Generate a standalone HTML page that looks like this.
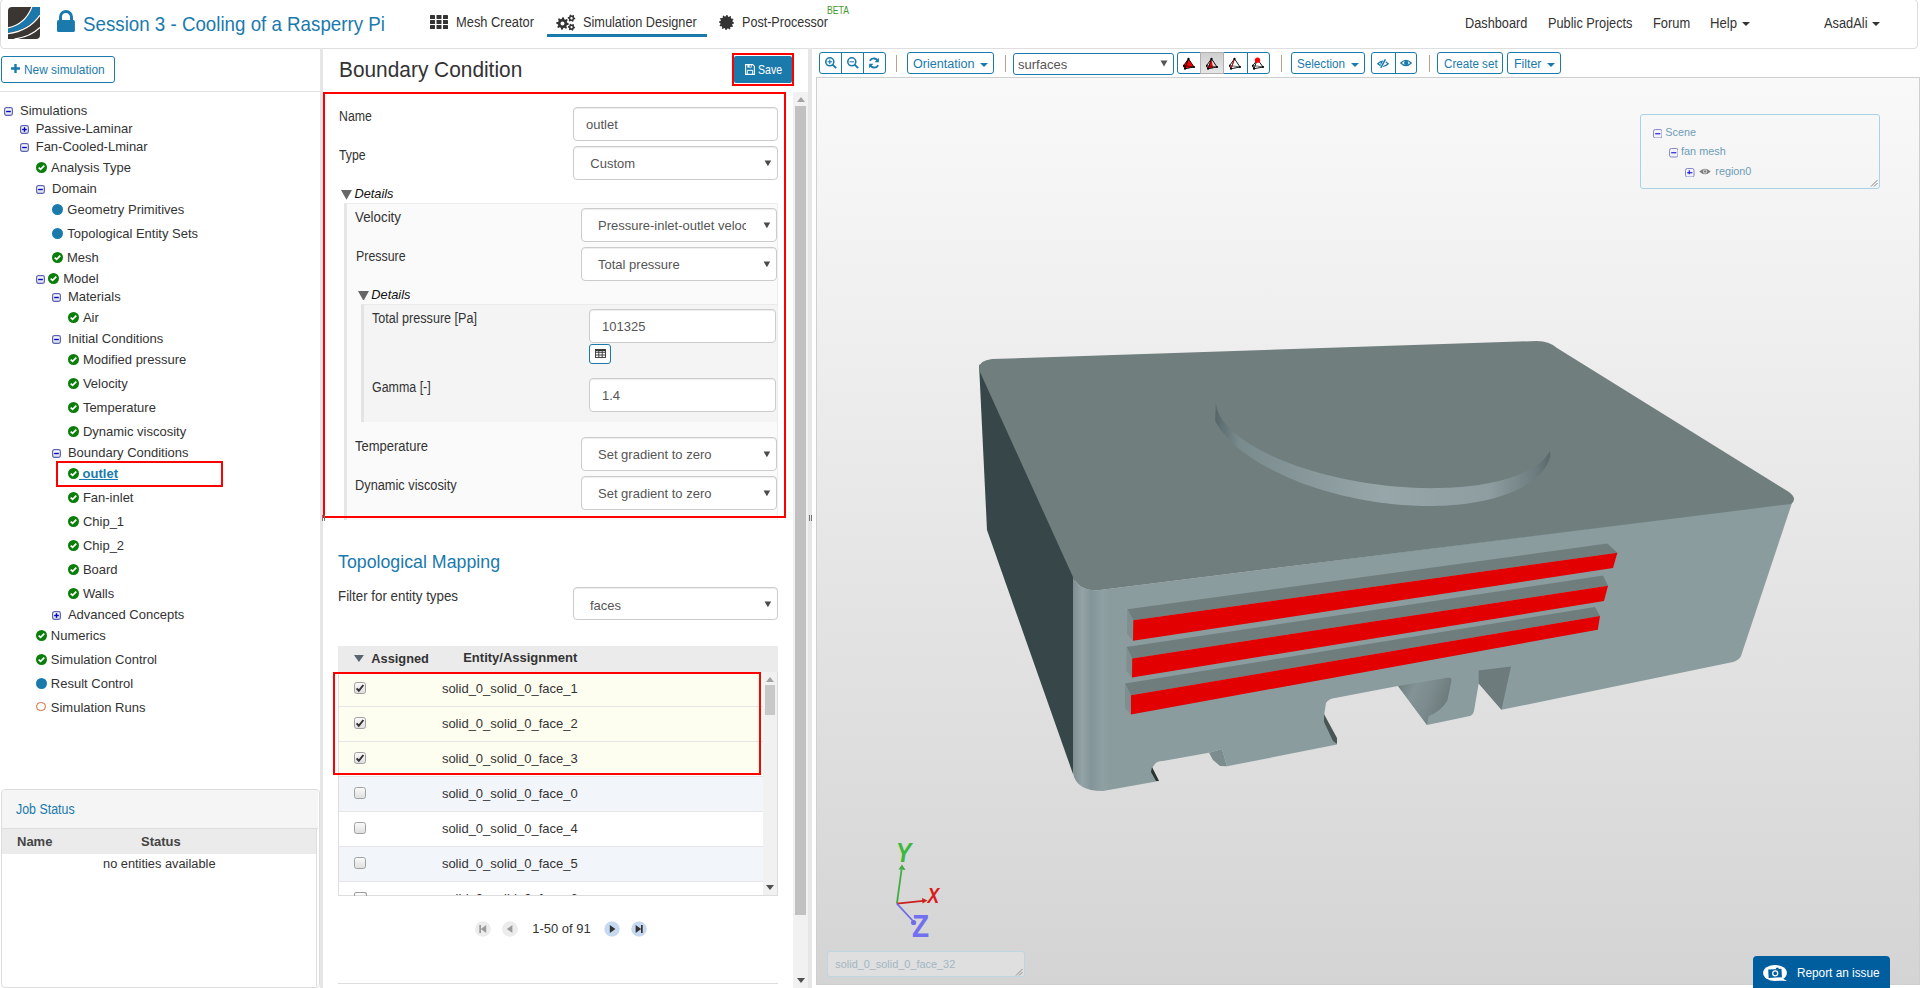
<!DOCTYPE html>
<html><head><meta charset="utf-8"><title>Simulation Designer</title>
<style>
html,body{margin:0;padding:0;width:1920px;height:988px;overflow:hidden;background:#fff;}
body{position:relative;font-family:"Liberation Sans", sans-serif;}
.a{position:absolute;}
.t{position:absolute;white-space:nowrap;font-family:"Liberation Sans", sans-serif;}
svg{display:block;}
</style></head><body>
<div class="a" style="left:0px;top:-1px;width:1916px;height:48px;border:1px solid #dedede;border-radius:4px;background:#fff;"></div>
<svg class="a" style="left:8px;top:7px" width="32" height="32" viewBox="0 0 32 32">
<path d="M4,0 H32 V28 Q32,32 28,32 H0 V4 Q0,0 4,0 Z" fill="#3b3632"/>
<path d="M24.6,0 H32 V7.3 C24,18.5 12.5,24.2 0,25.8 V21.4 C11.5,19.2 20,12 24.6,0 Z" fill="#1a78ad"/>
<path d="M23.9,0 C19.4,11.4 11.2,18.6 0,20.8" stroke="#fff" stroke-width="1.2" fill="none"/>
<path d="M32,8.2 C24.3,19.3 12.8,25 0,26.7" stroke="#fff" stroke-width="1.2" fill="none"/>
<path d="M32,20.4 C26,26.3 17,30.6 6.2,32" stroke="#fff" stroke-width="1.2" fill="none"/>
</svg>
<svg class="a" style="left:57px;top:9.9px" width="18" height="22.1" viewBox="0 0 18 22.1">
<path d="M3.5,11 V7 A5.5,5.5 0 0 1 14.5,7 V11" stroke="#1a7aac" stroke-width="3" fill="none"/>
<rect x="0" y="9.9" width="17.9" height="12.1" rx="1.6" fill="#1a7aac"/></svg>
<div class="t" style="left:83.00px;top:11.70px;font-size:19.62px;line-height:24px;color:#1a7aac;transform:scaleX(0.9552);transform-origin:0 0;">Session 3 - Cooling of a Rasperry Pi</div>
<svg class="a" style="left:430px;top:15px" width="18" height="14" viewBox="0 0 18 14">
<g fill="#333">
<rect x="0" y="0" width="5" height="4" rx="0.6"/><rect x="6.5" y="0" width="5" height="4" rx="0.6"/><rect x="13" y="0" width="5" height="4" rx="0.6"/>
<rect x="0" y="5" width="5" height="4" rx="0.6"/><rect x="6.5" y="5" width="5" height="4" rx="0.6"/><rect x="13" y="5" width="5" height="4" rx="0.6"/>
<rect x="0" y="10" width="5" height="4" rx="0.6"/><rect x="6.5" y="10" width="5" height="4" rx="0.6"/><rect x="13" y="10" width="5" height="4" rx="0.6"/>
</g></svg>
<div class="t" style="left:456.25px;top:13.96px;font-size:14.53px;line-height:17px;color:#333;transform:scaleX(0.8868);transform-origin:0 0;">Mesh Creator</div>
<svg class="a" style="left:556px;top:14px" width="20" height="17" viewBox="0 0 20 17"><path d="M12.80,9.50 L12.68,10.73 L10.75,11.26 L10.32,12.06 L10.95,13.95 L10.00,14.74 L8.26,13.75 L7.40,14.01 L6.50,15.80 L5.27,15.68 L4.74,13.75 L3.94,13.32 L2.05,13.95 L1.26,13.00 L2.25,11.26 L1.99,10.40 L0.20,9.50 L0.32,8.27 L2.25,7.74 L2.68,6.94 L2.05,5.05 L3.00,4.26 L4.74,5.25 L5.60,4.99 L6.50,3.20 L7.73,3.32 L8.26,5.25 L9.06,5.68 L10.95,5.05 L11.74,6.00 L10.75,7.74 L11.01,8.60 Z M8.5,9.5 A2.0,2.0 0 1 0 4.5,9.5 A2.0,2.0 0 1 0 8.5,9.5 Z" fill="#333" fill-rule="evenodd"/><path d="M19.30,4.20 L19.17,5.18 L17.92,5.60 L17.48,6.18 L17.40,7.49 L16.48,7.87 L15.50,7.00 L14.78,6.90 L13.60,7.49 L12.81,6.89 L13.08,5.60 L12.80,4.92 L11.70,4.20 L11.83,3.22 L13.08,2.80 L13.52,2.22 L13.60,0.91 L14.52,0.53 L15.50,1.40 L16.22,1.50 L17.40,0.91 L18.19,1.51 L17.92,2.80 L18.20,3.48 Z M16.7,4.2 A1.2,1.2 0 1 0 14.3,4.2 A1.2,1.2 0 1 0 16.7,4.2 Z" fill="#333" fill-rule="evenodd"/><path d="M19.10,13.20 L18.98,14.13 L17.84,14.55 L17.41,15.11 L17.30,16.32 L16.43,16.68 L15.50,15.90 L14.80,15.81 L13.70,16.32 L12.95,15.75 L13.16,14.55 L12.89,13.90 L11.90,13.20 L12.02,12.27 L13.16,11.85 L13.59,11.29 L13.70,10.08 L14.57,9.72 L15.50,10.50 L16.20,10.59 L17.30,10.08 L18.05,10.65 L17.84,11.85 L18.11,12.50 Z M16.6,13.2 A1.1,1.1 0 1 0 14.4,13.2 A1.1,1.1 0 1 0 16.6,13.2 Z" fill="#333" fill-rule="evenodd"/></svg>
<div class="t" style="left:583.00px;top:13.96px;font-size:14.53px;line-height:17px;color:#333;transform:scaleX(0.8755);transform-origin:0 0;">Simulation Designer</div>
<div class="a" style="left:547px;top:34px;width:160px;height:3px;background:#1a7aac;"></div>
<svg class="a" style="left:719px;top:15px" width="15" height="15" viewBox="0 0 15 15"><path d="M15.00,7.50 L14.94,8.48 L13.30,9.05 L13.04,9.80 L14.00,11.25 L13.45,12.07 L11.74,11.74 L11.15,12.26 L11.25,14.00 L10.37,14.43 L9.05,13.30 L8.28,13.45 L7.50,15.00 L6.52,14.94 L5.95,13.30 L5.20,13.04 L3.75,14.00 L2.93,13.45 L3.26,11.74 L2.74,11.15 L1.00,11.25 L0.57,10.37 L1.70,9.05 L1.55,8.28 L0.00,7.50 L0.06,6.52 L1.70,5.95 L1.96,5.20 L1.00,3.75 L1.55,2.93 L3.26,3.26 L3.85,2.74 L3.75,1.00 L4.63,0.57 L5.95,1.70 L6.72,1.55 L7.50,0.00 L8.48,0.06 L9.05,1.70 L9.80,1.96 L11.25,1.00 L12.07,1.55 L11.74,3.26 L12.26,3.85 L14.00,3.75 L14.43,4.63 L13.30,5.95 L13.45,6.72 Z M7.51,7.5 A0.01,0.01 0 1 0 7.49,7.5 A0.01,0.01 0 1 0 7.51,7.5 Z" fill="#333" fill-rule="evenodd"/><circle cx="7.5" cy="7.5" r="6" fill="#333"/></svg>
<div class="t" style="left:742.00px;top:13.96px;font-size:14.53px;line-height:17px;color:#333;transform:scaleX(0.8664);transform-origin:0 0;">Post-Processor</div>
<div class="t" style="left:827.00px;top:3.62px;font-size:10.61px;line-height:13px;color:#3f9a2a;transform:scaleX(0.8167);transform-origin:0 0;">BETA</div>
<div class="t" style="left:1465.00px;top:14.96px;font-size:14.53px;line-height:17px;color:#333;transform:scaleX(0.8783);transform-origin:0 0;">Dashboard</div>
<div class="t" style="left:1548.00px;top:14.96px;font-size:14.53px;line-height:17px;color:#333;transform:scaleX(0.8799);transform-origin:0 0;">Public Projects</div>
<div class="t" style="left:1652.80px;top:14.96px;font-size:14.53px;line-height:17px;color:#333;transform:scaleX(0.8870);transform-origin:0 0;">Forum</div>
<div class="t" style="left:1710.30px;top:14.96px;font-size:14.53px;line-height:17px;color:#333;transform:scaleX(0.9076);transform-origin:0 0;">Help</div>
<svg class="a" style="left:1742px;top:22px" width="8" height="4" viewBox="0 0 8 4"><path d="M0 0 L8 0 L4 4Z" fill="#333"/></svg>
<div class="t" style="left:1824.00px;top:14.96px;font-size:14.53px;line-height:17px;color:#333;transform:scaleX(0.8835);transform-origin:0 0;">AsadAli</div>
<svg class="a" style="left:1872px;top:22px" width="8" height="4" viewBox="0 0 8 4"><path d="M0 0 L8 0 L4 4Z" fill="#333"/></svg>
<div class="a" style="left:1px;top:56px;width:112px;height:25px;border:1px solid #1a7aac;border-radius:3px;"></div>
<svg class="a" style="left:11px;top:64px" width="9" height="9" viewBox="0 0 9 9"><path d="M3.3 0 H5.7 V3.3 H9 V5.7 H5.7 V9 H3.3 V5.7 H0 V3.3 H3.3Z" fill="#1a7aac"/></svg>
<div class="t" style="left:23.70px;top:62.72px;font-size:12.35px;line-height:15px;color:#1a7aac;transform:scaleX(0.9631);transform-origin:0 0;">New simulation</div>
<div class="a" style="left:0px;top:91px;width:320px;height:1px;background:#e3e3e3;"></div>
<svg class="a" style="left:4px;top:107.0px" width="9" height="9" viewBox="0 0 9 9"><defs><linearGradient id="tg" x1="0" y1="0" x2="0" y2="1"><stop offset="0" stop-color="#fff"/><stop offset="1" stop-color="#dcdce6"/></linearGradient></defs><rect x="0.6" y="0.6" width="7.8" height="7.8" rx="1.8" fill="url(#tg)" stroke="#5a64b4" stroke-width="1.2"/><path d="M2.2 4.5 H6.8" stroke="#0000c8" stroke-width="1.4"/></svg>
<div class="t" style="left:20.00px;top:102.89px;font-size:13px;line-height:16px;color:#333;">Simulations</div>
<svg class="a" style="left:20px;top:125.3px" width="9" height="9" viewBox="0 0 9 9"><defs><linearGradient id="tg" x1="0" y1="0" x2="0" y2="1"><stop offset="0" stop-color="#fff"/><stop offset="1" stop-color="#dcdce6"/></linearGradient></defs><rect x="0.6" y="0.6" width="7.8" height="7.8" rx="1.8" fill="url(#tg)" stroke="#5a64b4" stroke-width="1.2"/><path d="M2.2 4.5 H6.8" stroke="#0000c8" stroke-width="1.4"/><path d="M4.5 2.2 V6.8" stroke="#0000c8" stroke-width="1.4"/></svg>
<div class="t" style="left:35.70px;top:121.19px;font-size:13px;line-height:16px;color:#333;">Passive-Laminar</div>
<svg class="a" style="left:20px;top:143.1px" width="9" height="9" viewBox="0 0 9 9"><defs><linearGradient id="tg" x1="0" y1="0" x2="0" y2="1"><stop offset="0" stop-color="#fff"/><stop offset="1" stop-color="#dcdce6"/></linearGradient></defs><rect x="0.6" y="0.6" width="7.8" height="7.8" rx="1.8" fill="url(#tg)" stroke="#5a64b4" stroke-width="1.2"/><path d="M2.2 4.5 H6.8" stroke="#0000c8" stroke-width="1.4"/></svg>
<div class="t" style="left:35.70px;top:138.99px;font-size:13px;line-height:16px;color:#333;">Fan-Cooled-Lminar</div>
<svg class="a" style="left:36px;top:161.7px" width="11" height="11" viewBox="0 0 11 11"><circle cx="5.5" cy="5.5" r="5.5" fill="#0a7d0a"/><path d="M2.7 5.6 L4.6 7.4 L8.3 3.6" stroke="#fff" stroke-width="1.7" fill="none"/></svg>
<div class="t" style="left:51.00px;top:159.59px;font-size:13px;line-height:16px;color:#333;">Analysis Type</div>
<svg class="a" style="left:36px;top:185.2px" width="9" height="9" viewBox="0 0 9 9"><defs><linearGradient id="tg" x1="0" y1="0" x2="0" y2="1"><stop offset="0" stop-color="#fff"/><stop offset="1" stop-color="#dcdce6"/></linearGradient></defs><rect x="0.6" y="0.6" width="7.8" height="7.8" rx="1.8" fill="url(#tg)" stroke="#5a64b4" stroke-width="1.2"/><path d="M2.2 4.5 H6.8" stroke="#0000c8" stroke-width="1.4"/></svg>
<div class="t" style="left:52.00px;top:181.09px;font-size:13px;line-height:16px;color:#333;">Domain</div>
<div class="a" style="left:52px;top:203.7px;width:11px;height:11px;border-radius:50%;background:#1a7aac;"></div>
<div class="t" style="left:67.30px;top:201.59px;font-size:13px;line-height:16px;color:#333;">Geometry Primitives</div>
<div class="a" style="left:52px;top:227.8px;width:11px;height:11px;border-radius:50%;background:#1a7aac;"></div>
<div class="t" style="left:67.30px;top:225.69px;font-size:13px;line-height:16px;color:#333;">Topological Entity Sets</div>
<svg class="a" style="left:52px;top:251.8px" width="11" height="11" viewBox="0 0 11 11"><circle cx="5.5" cy="5.5" r="5.5" fill="#0a7d0a"/><path d="M2.7 5.6 L4.6 7.4 L8.3 3.6" stroke="#fff" stroke-width="1.7" fill="none"/></svg>
<div class="t" style="left:67.00px;top:249.69px;font-size:13px;line-height:16px;color:#333;">Mesh</div>
<svg class="a" style="left:36px;top:274.8px" width="9" height="9" viewBox="0 0 9 9"><defs><linearGradient id="tg" x1="0" y1="0" x2="0" y2="1"><stop offset="0" stop-color="#fff"/><stop offset="1" stop-color="#dcdce6"/></linearGradient></defs><rect x="0.6" y="0.6" width="7.8" height="7.8" rx="1.8" fill="url(#tg)" stroke="#5a64b4" stroke-width="1.2"/><path d="M2.2 4.5 H6.8" stroke="#0000c8" stroke-width="1.4"/></svg>
<svg class="a" style="left:48px;top:272.8px" width="11" height="11" viewBox="0 0 11 11"><circle cx="5.5" cy="5.5" r="5.5" fill="#0a7d0a"/><path d="M2.7 5.6 L4.6 7.4 L8.3 3.6" stroke="#fff" stroke-width="1.7" fill="none"/></svg>
<div class="t" style="left:63.20px;top:270.69px;font-size:13px;line-height:16px;color:#333;">Model</div>
<svg class="a" style="left:52px;top:292.8px" width="9" height="9" viewBox="0 0 9 9"><defs><linearGradient id="tg" x1="0" y1="0" x2="0" y2="1"><stop offset="0" stop-color="#fff"/><stop offset="1" stop-color="#dcdce6"/></linearGradient></defs><rect x="0.6" y="0.6" width="7.8" height="7.8" rx="1.8" fill="url(#tg)" stroke="#5a64b4" stroke-width="1.2"/><path d="M2.2 4.5 H6.8" stroke="#0000c8" stroke-width="1.4"/></svg>
<div class="t" style="left:67.90px;top:288.69px;font-size:13px;line-height:16px;color:#333;">Materials</div>
<svg class="a" style="left:68px;top:311.8px" width="11" height="11" viewBox="0 0 11 11"><circle cx="5.5" cy="5.5" r="5.5" fill="#0a7d0a"/><path d="M2.7 5.6 L4.6 7.4 L8.3 3.6" stroke="#fff" stroke-width="1.7" fill="none"/></svg>
<div class="t" style="left:82.90px;top:309.69px;font-size:13px;line-height:16px;color:#333;">Air</div>
<svg class="a" style="left:52px;top:334.8px" width="9" height="9" viewBox="0 0 9 9"><defs><linearGradient id="tg" x1="0" y1="0" x2="0" y2="1"><stop offset="0" stop-color="#fff"/><stop offset="1" stop-color="#dcdce6"/></linearGradient></defs><rect x="0.6" y="0.6" width="7.8" height="7.8" rx="1.8" fill="url(#tg)" stroke="#5a64b4" stroke-width="1.2"/><path d="M2.2 4.5 H6.8" stroke="#0000c8" stroke-width="1.4"/></svg>
<div class="t" style="left:67.90px;top:330.69px;font-size:13px;line-height:16px;color:#333;">Initial Conditions</div>
<svg class="a" style="left:68px;top:353.8px" width="11" height="11" viewBox="0 0 11 11"><circle cx="5.5" cy="5.5" r="5.5" fill="#0a7d0a"/><path d="M2.7 5.6 L4.6 7.4 L8.3 3.6" stroke="#fff" stroke-width="1.7" fill="none"/></svg>
<div class="t" style="left:82.90px;top:351.69px;font-size:13px;line-height:16px;color:#333;">Modified pressure</div>
<svg class="a" style="left:68px;top:377.8px" width="11" height="11" viewBox="0 0 11 11"><circle cx="5.5" cy="5.5" r="5.5" fill="#0a7d0a"/><path d="M2.7 5.6 L4.6 7.4 L8.3 3.6" stroke="#fff" stroke-width="1.7" fill="none"/></svg>
<div class="t" style="left:82.90px;top:375.69px;font-size:13px;line-height:16px;color:#333;">Velocity</div>
<svg class="a" style="left:68px;top:401.8px" width="11" height="11" viewBox="0 0 11 11"><circle cx="5.5" cy="5.5" r="5.5" fill="#0a7d0a"/><path d="M2.7 5.6 L4.6 7.4 L8.3 3.6" stroke="#fff" stroke-width="1.7" fill="none"/></svg>
<div class="t" style="left:82.90px;top:399.69px;font-size:13px;line-height:16px;color:#333;">Temperature</div>
<svg class="a" style="left:68px;top:425.8px" width="11" height="11" viewBox="0 0 11 11"><circle cx="5.5" cy="5.5" r="5.5" fill="#0a7d0a"/><path d="M2.7 5.6 L4.6 7.4 L8.3 3.6" stroke="#fff" stroke-width="1.7" fill="none"/></svg>
<div class="t" style="left:82.90px;top:423.69px;font-size:13px;line-height:16px;color:#333;">Dynamic viscosity</div>
<svg class="a" style="left:52px;top:448.8px" width="9" height="9" viewBox="0 0 9 9"><defs><linearGradient id="tg" x1="0" y1="0" x2="0" y2="1"><stop offset="0" stop-color="#fff"/><stop offset="1" stop-color="#dcdce6"/></linearGradient></defs><rect x="0.6" y="0.6" width="7.8" height="7.8" rx="1.8" fill="url(#tg)" stroke="#5a64b4" stroke-width="1.2"/><path d="M2.2 4.5 H6.8" stroke="#0000c8" stroke-width="1.4"/></svg>
<div class="t" style="left:67.90px;top:444.69px;font-size:13px;line-height:16px;color:#333;">Boundary Conditions</div>
<svg class="a" style="left:68px;top:467.8px" width="11" height="11" viewBox="0 0 11 11"><circle cx="5.5" cy="5.5" r="5.5" fill="#0a7d0a"/><path d="M2.7 5.6 L4.6 7.4 L8.3 3.6" stroke="#fff" stroke-width="1.7" fill="none"/></svg>
<div class="t" style="left:79px;top:465.7px;font-size:13px;line-height:15px;color:#1a7aac;font-weight:bold;text-decoration:underline;white-space:pre"> outlet</div>
<svg class="a" style="left:68px;top:491.8px" width="11" height="11" viewBox="0 0 11 11"><circle cx="5.5" cy="5.5" r="5.5" fill="#0a7d0a"/><path d="M2.7 5.6 L4.6 7.4 L8.3 3.6" stroke="#fff" stroke-width="1.7" fill="none"/></svg>
<div class="t" style="left:82.90px;top:489.69px;font-size:13px;line-height:16px;color:#333;">Fan-inlet</div>
<svg class="a" style="left:68px;top:515.8px" width="11" height="11" viewBox="0 0 11 11"><circle cx="5.5" cy="5.5" r="5.5" fill="#0a7d0a"/><path d="M2.7 5.6 L4.6 7.4 L8.3 3.6" stroke="#fff" stroke-width="1.7" fill="none"/></svg>
<div class="t" style="left:82.90px;top:513.69px;font-size:13px;line-height:16px;color:#333;">Chip_1</div>
<svg class="a" style="left:68px;top:539.8px" width="11" height="11" viewBox="0 0 11 11"><circle cx="5.5" cy="5.5" r="5.5" fill="#0a7d0a"/><path d="M2.7 5.6 L4.6 7.4 L8.3 3.6" stroke="#fff" stroke-width="1.7" fill="none"/></svg>
<div class="t" style="left:82.90px;top:537.69px;font-size:13px;line-height:16px;color:#333;">Chip_2</div>
<svg class="a" style="left:68px;top:563.8px" width="11" height="11" viewBox="0 0 11 11"><circle cx="5.5" cy="5.5" r="5.5" fill="#0a7d0a"/><path d="M2.7 5.6 L4.6 7.4 L8.3 3.6" stroke="#fff" stroke-width="1.7" fill="none"/></svg>
<div class="t" style="left:82.90px;top:561.69px;font-size:13px;line-height:16px;color:#333;">Board</div>
<svg class="a" style="left:68px;top:587.8px" width="11" height="11" viewBox="0 0 11 11"><circle cx="5.5" cy="5.5" r="5.5" fill="#0a7d0a"/><path d="M2.7 5.6 L4.6 7.4 L8.3 3.6" stroke="#fff" stroke-width="1.7" fill="none"/></svg>
<div class="t" style="left:82.90px;top:585.69px;font-size:13px;line-height:16px;color:#333;">Walls</div>
<svg class="a" style="left:52px;top:610.8px" width="9" height="9" viewBox="0 0 9 9"><defs><linearGradient id="tg" x1="0" y1="0" x2="0" y2="1"><stop offset="0" stop-color="#fff"/><stop offset="1" stop-color="#dcdce6"/></linearGradient></defs><rect x="0.6" y="0.6" width="7.8" height="7.8" rx="1.8" fill="url(#tg)" stroke="#5a64b4" stroke-width="1.2"/><path d="M2.2 4.5 H6.8" stroke="#0000c8" stroke-width="1.4"/><path d="M4.5 2.2 V6.8" stroke="#0000c8" stroke-width="1.4"/></svg>
<div class="t" style="left:67.90px;top:606.69px;font-size:13px;line-height:16px;color:#333;">Advanced Concepts</div>
<svg class="a" style="left:36px;top:629.8px" width="11" height="11" viewBox="0 0 11 11"><circle cx="5.5" cy="5.5" r="5.5" fill="#0a7d0a"/><path d="M2.7 5.6 L4.6 7.4 L8.3 3.6" stroke="#fff" stroke-width="1.7" fill="none"/></svg>
<div class="t" style="left:50.80px;top:627.69px;font-size:13px;line-height:16px;color:#333;">Numerics</div>
<svg class="a" style="left:36px;top:653.8px" width="11" height="11" viewBox="0 0 11 11"><circle cx="5.5" cy="5.5" r="5.5" fill="#0a7d0a"/><path d="M2.7 5.6 L4.6 7.4 L8.3 3.6" stroke="#fff" stroke-width="1.7" fill="none"/></svg>
<div class="t" style="left:50.80px;top:651.69px;font-size:13px;line-height:16px;color:#333;">Simulation Control</div>
<div class="a" style="left:36px;top:677.8px;width:11px;height:11px;border-radius:50%;background:#1a7aac;"></div>
<div class="t" style="left:50.80px;top:675.69px;font-size:13px;line-height:16px;color:#333;">Result Control</div>
<div class="a" style="left:36px;top:701.8px;width:7.6px;height:7.6px;border-radius:50%;border:1.7px solid #e0602a;"></div>
<div class="t" style="left:50.80px;top:699.69px;font-size:13px;line-height:16px;color:#333;">Simulation Runs</div>
<div class="a" style="left:56px;top:461px;width:163px;height:22px;border:2px solid #ff0000;"></div>
<div class="a" style="left:1px;top:789px;width:317px;height:197px;border:1px solid #ddd;border-radius:4px;background:#fff;"></div>
<div class="a" style="left:2px;top:790px;width:316px;height:38px;background:#f5f5f5;border-bottom:1px solid #ddd;border-radius:3px 3px 0 0;"></div>
<div class="t" style="left:16.30px;top:801.21px;font-size:13.81px;line-height:17px;color:#1a7aac;transform:scaleX(0.8989);transform-origin:0 0;">Job Status</div>
<div class="a" style="left:2px;top:829px;width:314px;height:25px;background:#ebebeb;"></div>
<div class="a" style="left:316px;top:829px;width:1px;height:157px;background:#ddd;"></div>
<div class="t" style="left:17.00px;top:833.99px;font-size:13px;line-height:16px;color:#444;font-weight:bold;">Name</div>
<div class="t" style="left:141.00px;top:833.99px;font-size:13px;line-height:16px;color:#444;font-weight:bold;">Status</div>
<div class="t" style="left:102.50px;top:855.81px;font-size:13.52px;line-height:16px;color:#333;transform:scaleX(0.9479);transform-origin:0 0;">no entities available</div>
<div class="a" style="left:320px;top:48px;width:3px;height:940px;background:#e6e6e6;"></div>
<div class="t" style="left:339.40px;top:56.94px;font-size:21.8px;line-height:26px;color:#333;transform:scaleX(0.9572);transform-origin:0 0;">Boundary Condition</div>
<div class="a" style="left:732px;top:53px;width:58px;height:29px;border:2px solid #ff0000;"></div>
<div class="a" style="left:734px;top:55.8px;width:58px;height:27px;background:#1a7aac;border-radius:2px;"></div>
<svg class="a" style="left:745px;top:64px" width="10" height="11" viewBox="0 0 10 11">
<path d="M0.6 0.6 H7.8 L9.4 2.4 V10.4 H0.6 Z" fill="none" stroke="#fff" stroke-width="1.1"/>
<rect x="2.4" y="0.6" width="4.2" height="3" fill="#fff"/><rect x="4.6" y="1.1" width="1.1" height="2" fill="#1a7aac"/>
<path d="M2.3 10.4 V6.3 H7.7 V10.4" fill="none" stroke="#fff" stroke-width="1"/>
</svg>
<div class="t" style="left:757.90px;top:63.32px;font-size:12.06px;line-height:14px;color:#fff;transform:scaleX(0.8774);transform-origin:0 0;">Save</div>
<div class="a" style="left:793px;top:92px;width:15px;height:896px;background:#f1f1f1;"></div>
<div class="a" style="left:795px;top:106px;width:11px;height:809px;background:#c1c1c1;"></div>
<svg class="a" style="left:797px;top:97px" width="8" height="5" viewBox="0 0 8 5"><path d="M0 5 L4 0 L8 5Z" fill="#a3a3a3"/></svg>
<svg class="a" style="left:797px;top:978px" width="8" height="5" viewBox="0 0 8 5"><path d="M0 0 L4 5 L8 0Z" fill="#505050"/></svg>
<div class="t" style="left:338.60px;top:107.96px;font-size:14.53px;line-height:17px;color:#333;transform:scaleX(0.8468);transform-origin:0 0;">Name</div>
<div class="a" style="left:573px;top:107px;width:203px;height:32px;border:1px solid #ccc;border-radius:4px;background:#fff;box-shadow:inset 0 1px 1px rgba(0,0,0,.075);"></div>
<div class="t" style="left:586.00px;top:116.59px;font-size:13px;line-height:16px;color:#555;">outlet</div>
<div class="t" style="left:338.60px;top:146.96px;font-size:14.53px;line-height:17px;color:#333;transform:scaleX(0.8480);transform-origin:0 0;">Type</div>
<div class="a" style="left:573px;top:146px;width:203px;height:32px;border:1px solid #ccc;border-radius:4px;background:#fff;overflow:hidden;box-shadow:inset 0 1px 1px rgba(0,0,0,.075);"></div>
<div class="t" style="left:590.3px;top:156.1px;width:167.70000000000005px;overflow:hidden;font-size:13px;line-height:15px;color:#555;">Custom</div>
<svg class="a" style="left:764px;top:159.7px" width="8" height="7" viewBox="0 0 8 7"><path d="M0.6 0.6 L7.2 0.6 L3.9 6.3Z" fill="#4a4a4a"/></svg>
<svg class="a" style="left:341px;top:190.1px" width="11" height="9.8" viewBox="0 0 11 9.8"><path d="M0 0 L11 0 L5.5 9.8Z" fill="#666"/></svg>
<div class="t" style="left:354.40px;top:185.56px;font-size:12.8px;line-height:15px;color:#111;font-style:italic;">Details</div>
<div class="a" style="left:344px;top:203px;width:434px;height:317px;background:#fafafa;border-left:3px solid #e6e6e6;border-top:1px solid #eee;border-right:1px solid #eee;box-sizing:border-box;"></div>
<div class="t" style="left:355.20px;top:208.96px;font-size:14.53px;line-height:17px;color:#333;transform:scaleX(0.9191);transform-origin:0 0;">Velocity</div>
<div class="a" style="left:581.2px;top:208px;width:193.5px;height:32px;border:1px solid #ccc;border-radius:4px;background:#fff;overflow:hidden;box-shadow:inset 0 1px 1px rgba(0,0,0,.075);"></div>
<div class="t" style="left:598px;top:217.5px;width:148px;overflow:hidden;font-size:13px;line-height:15px;color:#555;">Pressure-inlet-outlet velocity</div>
<svg class="a" style="left:762.7px;top:221.7px" width="8" height="7" viewBox="0 0 8 7"><path d="M0.6 0.6 L7.2 0.6 L3.9 6.3Z" fill="#4a4a4a"/></svg>
<div class="t" style="left:355.60px;top:247.96px;font-size:14.53px;line-height:17px;color:#333;transform:scaleX(0.8536);transform-origin:0 0;">Pressure</div>
<div class="a" style="left:581.2px;top:247px;width:193.5px;height:32px;border:1px solid #ccc;border-radius:4px;background:#fff;overflow:hidden;box-shadow:inset 0 1px 1px rgba(0,0,0,.075);"></div>
<div class="t" style="left:598px;top:256.5px;width:158.70000000000005px;overflow:hidden;font-size:13px;line-height:15px;color:#555;">Total pressure</div>
<svg class="a" style="left:762.7px;top:260.7px" width="8" height="7" viewBox="0 0 8 7"><path d="M0.6 0.6 L7.2 0.6 L3.9 6.3Z" fill="#4a4a4a"/></svg>
<svg class="a" style="left:358px;top:290.5px" width="11" height="9.8" viewBox="0 0 11 9.8"><path d="M0 0 L11 0 L5.5 9.8Z" fill="#666"/></svg>
<div class="t" style="left:371.30px;top:286.56px;font-size:12.8px;line-height:15px;color:#111;font-style:italic;">Details</div>
<div class="a" style="left:361px;top:304px;width:416px;height:118px;background:#f4f4f4;border-left:3px solid #e3e3e3;border-top:1px solid #eaeaea;box-sizing:border-box;"></div>
<div class="t" style="left:372.00px;top:309.96px;font-size:14.53px;line-height:17px;color:#333;transform:scaleX(0.8674);transform-origin:0 0;">Total pressure [Pa]</div>
<div class="a" style="left:589.2px;top:309px;width:184.5px;height:32px;border:1px solid #ccc;border-radius:4px;background:#fff;box-shadow:inset 0 1px 1px rgba(0,0,0,.075);"></div>
<div class="t" style="left:602.00px;top:319.19px;font-size:13px;line-height:16px;color:#555;">101325</div>
<div class="a" style="left:589px;top:344.3px;width:20px;height:17.7px;border:1px solid #1a7aac;border-radius:3px;background:#fff;"></div>
<svg class="a" style="left:594.5px;top:349px" width="11" height="9" viewBox="0 0 11 9"><g fill="none" stroke="#333" stroke-width="0.9">
<rect x="0.5" y="0.5" width="10" height="8"/><path d="M0.5 3.3 H10.5 M0.5 6 H10.5 M3.8 1 V8.5 M7.2 1 V8.5"/></g><rect x="0.5" y="0.5" width="10" height="1.6" fill="#333"/></svg>
<div class="t" style="left:372.00px;top:379.46px;font-size:14.53px;line-height:17px;color:#333;transform:scaleX(0.8562);transform-origin:0 0;">Gamma [-]</div>
<div class="a" style="left:589.2px;top:378.2px;width:184.5px;height:32px;border:1px solid #ccc;border-radius:4px;background:#fff;box-shadow:inset 0 1px 1px rgba(0,0,0,.075);"></div>
<div class="t" style="left:602.00px;top:388.19px;font-size:13px;line-height:16px;color:#555;">1.4</div>
<div class="t" style="left:355.20px;top:437.96px;font-size:14.53px;line-height:17px;color:#333;transform:scaleX(0.8957);transform-origin:0 0;">Temperature</div>
<div class="a" style="left:581.2px;top:437.3px;width:193.5px;height:31.299999999999997px;border:1px solid #ccc;border-radius:4px;background:#fff;overflow:hidden;box-shadow:inset 0 1px 1px rgba(0,0,0,.075);"></div>
<div class="t" style="left:598px;top:446.5px;width:158.70000000000005px;overflow:hidden;font-size:13px;line-height:15px;color:#555;">Set gradient to zero</div>
<svg class="a" style="left:762.7px;top:450.6px" width="8" height="7" viewBox="0 0 8 7"><path d="M0.6 0.6 L7.2 0.6 L3.9 6.3Z" fill="#4a4a4a"/></svg>
<div class="t" style="left:355.20px;top:476.96px;font-size:14.53px;line-height:17px;color:#333;transform:scaleX(0.8814);transform-origin:0 0;">Dynamic viscosity</div>
<div class="a" style="left:581.2px;top:476.4px;width:193.5px;height:31.299999999999997px;border:1px solid #ccc;border-radius:4px;background:#fff;overflow:hidden;box-shadow:inset 0 1px 1px rgba(0,0,0,.075);"></div>
<div class="t" style="left:598px;top:485.5px;width:158.70000000000005px;overflow:hidden;font-size:13px;line-height:15px;color:#555;">Set gradient to zero</div>
<svg class="a" style="left:762.7px;top:489.7px" width="8" height="7" viewBox="0 0 8 7"><path d="M0.6 0.6 L7.2 0.6 L3.9 6.3Z" fill="#4a4a4a"/></svg>
<div class="a" style="left:323px;top:92px;width:459px;height:422px;border:2px solid #ff0000;"></div>
<div class="t" style="left:338.20px;top:549.85px;font-size:18.9px;line-height:23px;color:#1a7aac;transform:scaleX(0.9407);transform-origin:0 0;">Topological Mapping</div>
<div class="t" style="left:338.40px;top:588.26px;font-size:14.53px;line-height:17px;color:#333;transform:scaleX(0.9182);transform-origin:0 0;">Filter for entity types</div>
<div class="a" style="left:573px;top:587.4px;width:203px;height:31px;border:1px solid #ccc;border-radius:4px;background:#fff;overflow:hidden;box-shadow:inset 0 1px 1px rgba(0,0,0,.075);"></div>
<div class="t" style="left:590px;top:597.6px;width:168px;overflow:hidden;font-size:13px;line-height:15px;color:#555;">faces</div>
<svg class="a" style="left:764px;top:600.6px" width="8" height="7" viewBox="0 0 8 7"><path d="M0.6 0.6 L7.2 0.6 L3.9 6.3Z" fill="#4a4a4a"/></svg>
<div class="a" style="left:338px;top:646px;width:440px;height:26px;background:#ebebeb;"></div>
<svg class="a" style="left:354.4px;top:654.6px" width="9.9" height="7.1" viewBox="0 0 9.9 7.1"><path d="M0 0 L9.9 0 L4.95 7.1Z" fill="#5a6570"/></svg>
<div class="t" style="left:371.30px;top:650.96px;font-size:12.8px;line-height:15px;color:#333;font-weight:bold;">Assigned</div>
<div class="t" style="left:463.20px;top:650.39px;font-size:13px;line-height:16px;color:#333;font-weight:bold;">Entity/Assignment</div>
<div class="a" style="left:338px;top:672px;width:440px;height:224px;border:1px solid #ddd;border-top:none;box-sizing:border-box;background:#fff;overflow:hidden;"></div>
<div class="a" style="left:339px;top:672px;width:424px;height:35px;background:#fdfdf0;border-bottom:1px solid #e6e6e6;box-sizing:border-box;"></div>
<svg class="a" style="left:354px;top:682px" width="12" height="12" viewBox="0 0 12 12"><defs><linearGradient id="cbg" x1="0" y1="0" x2="0" y2="1"><stop offset="0" stop-color="#fbfbfb"/><stop offset="1" stop-color="#dedede"/></linearGradient></defs><rect x="0.5" y="0.5" width="11" height="11" rx="2.2" fill="url(#cbg)" stroke="#a0a0a0"/><path d="M2.6 6.4 L4.8 8.8 L9.4 3" stroke="#333" stroke-width="2" fill="none"/></svg>
<div class="t" style="left:441.90px;top:680.89px;font-size:13px;line-height:16px;color:#333;">solid_0_solid_0_face_1</div>
<div class="a" style="left:339px;top:707px;width:424px;height:35px;background:#fdfdf0;border-bottom:1px solid #e6e6e6;box-sizing:border-box;"></div>
<svg class="a" style="left:354px;top:717px" width="12" height="12" viewBox="0 0 12 12"><defs><linearGradient id="cbg" x1="0" y1="0" x2="0" y2="1"><stop offset="0" stop-color="#fbfbfb"/><stop offset="1" stop-color="#dedede"/></linearGradient></defs><rect x="0.5" y="0.5" width="11" height="11" rx="2.2" fill="url(#cbg)" stroke="#a0a0a0"/><path d="M2.6 6.4 L4.8 8.8 L9.4 3" stroke="#333" stroke-width="2" fill="none"/></svg>
<div class="t" style="left:441.90px;top:715.89px;font-size:13px;line-height:16px;color:#333;">solid_0_solid_0_face_2</div>
<div class="a" style="left:339px;top:742px;width:424px;height:35px;background:#fdfdf0;border-bottom:1px solid #e6e6e6;box-sizing:border-box;"></div>
<svg class="a" style="left:354px;top:752px" width="12" height="12" viewBox="0 0 12 12"><defs><linearGradient id="cbg" x1="0" y1="0" x2="0" y2="1"><stop offset="0" stop-color="#fbfbfb"/><stop offset="1" stop-color="#dedede"/></linearGradient></defs><rect x="0.5" y="0.5" width="11" height="11" rx="2.2" fill="url(#cbg)" stroke="#a0a0a0"/><path d="M2.6 6.4 L4.8 8.8 L9.4 3" stroke="#333" stroke-width="2" fill="none"/></svg>
<div class="t" style="left:441.90px;top:750.89px;font-size:13px;line-height:16px;color:#333;">solid_0_solid_0_face_3</div>
<div class="a" style="left:339px;top:777px;width:424px;height:35px;background:#f2f5fa;border-bottom:1px solid #e6e6e6;box-sizing:border-box;"></div>
<svg class="a" style="left:354px;top:787px" width="12" height="12" viewBox="0 0 12 12"><defs><linearGradient id="cbg" x1="0" y1="0" x2="0" y2="1"><stop offset="0" stop-color="#fbfbfb"/><stop offset="1" stop-color="#dedede"/></linearGradient></defs><rect x="0.5" y="0.5" width="11" height="11" rx="2.2" fill="url(#cbg)" stroke="#a0a0a0"/></svg>
<div class="t" style="left:441.90px;top:785.89px;font-size:13px;line-height:16px;color:#333;">solid_0_solid_0_face_0</div>
<div class="a" style="left:339px;top:812px;width:424px;height:35px;background:#fff;border-bottom:1px solid #e6e6e6;box-sizing:border-box;"></div>
<svg class="a" style="left:354px;top:822px" width="12" height="12" viewBox="0 0 12 12"><defs><linearGradient id="cbg" x1="0" y1="0" x2="0" y2="1"><stop offset="0" stop-color="#fbfbfb"/><stop offset="1" stop-color="#dedede"/></linearGradient></defs><rect x="0.5" y="0.5" width="11" height="11" rx="2.2" fill="url(#cbg)" stroke="#a0a0a0"/></svg>
<div class="t" style="left:441.90px;top:820.89px;font-size:13px;line-height:16px;color:#333;">solid_0_solid_0_face_4</div>
<div class="a" style="left:339px;top:847px;width:424px;height:35px;background:#f2f5fa;border-bottom:1px solid #e6e6e6;box-sizing:border-box;"></div>
<svg class="a" style="left:354px;top:857px" width="12" height="12" viewBox="0 0 12 12"><defs><linearGradient id="cbg" x1="0" y1="0" x2="0" y2="1"><stop offset="0" stop-color="#fbfbfb"/><stop offset="1" stop-color="#dedede"/></linearGradient></defs><rect x="0.5" y="0.5" width="11" height="11" rx="2.2" fill="url(#cbg)" stroke="#a0a0a0"/></svg>
<div class="t" style="left:441.90px;top:855.89px;font-size:13px;line-height:16px;color:#333;">solid_0_solid_0_face_5</div>
<div class="a" style="left:339px;top:882px;width:424px;height:13px;background:#fff;"></div>
<div class="a" style="left:354px;top:892px;width:11px;height:3px;border:1px solid #9a9a9a;border-bottom:none;border-radius:2.5px 2.5px 0 0;"></div>
<div class="a" style="left:441.9px;top:882px;height:13px;overflow:hidden;width:200px"><div class="t" style="left:0;top:8.6px;font-size:13px;line-height:15px;color:#333">solid_0_solid_0_face_6</div></div>
<div class="a" style="left:763px;top:672px;width:14px;height:223px;background:#f1f1f1;"></div>
<div class="a" style="left:765px;top:684.6px;width:10.4px;height:30px;background:#c8c8c8;"></div>
<svg class="a" style="left:766px;top:677px" width="8" height="5" viewBox="0 0 8 5"><path d="M0 5 L4 0 L8 5Z" fill="#a3a3a3"/></svg>
<svg class="a" style="left:766px;top:885px" width="8" height="5" viewBox="0 0 8 5"><path d="M0 0 L4 5 L8 0Z" fill="#505050"/></svg>
<div class="a" style="left:333px;top:672px;width:424px;height:99px;border:2px solid #ff0000;"></div>
<svg class="a" style="left:475.3px;top:920.8px" width="16" height="16" viewBox="0 0 16 16"><circle cx="8" cy="8" r="7.6" fill="#ececec"/><circle cx="8" cy="8" r="7.6" fill="none" stroke="rgba(0,0,0,0.04)" stroke-width="0.8"/><rect x="4.3" y="4" width="1.7" height="8" fill="#9a9a9a"/><path d="M11.2 4 L5.8 8 L11.2 12Z" fill="#9a9a9a"/></svg>
<svg class="a" style="left:502.4px;top:920.8px" width="16" height="16" viewBox="0 0 16 16"><circle cx="8" cy="8" r="7.6" fill="#ececec"/><circle cx="8" cy="8" r="7.6" fill="none" stroke="rgba(0,0,0,0.04)" stroke-width="0.8"/><path d="M10.4 4 L4.8 8 L10.4 12Z" fill="#9a9a9a"/></svg>
<div class="t" style="left:532.20px;top:921.49px;font-size:13px;line-height:16px;color:#333;">1-50 of 91</div>
<svg class="a" style="left:604.2px;top:920.8px" width="16" height="16" viewBox="0 0 16 16"><circle cx="8" cy="8" r="7.6" fill="#c6d9f1"/><circle cx="8" cy="8" r="7.6" fill="none" stroke="rgba(0,0,0,0.04)" stroke-width="0.8"/><path d="M5.8 4 L11.4 8 L5.8 12Z" fill="#333"/></svg>
<svg class="a" style="left:631.3px;top:920.8px" width="16" height="16" viewBox="0 0 16 16"><circle cx="8" cy="8" r="7.6" fill="#c6d9f1"/><circle cx="8" cy="8" r="7.6" fill="none" stroke="rgba(0,0,0,0.04)" stroke-width="0.8"/><path d="M4.6 4 L10.2 8 L4.6 12Z" fill="#333"/><rect x="10" y="4" width="1.7" height="8" fill="#333"/></svg>
<div class="a" style="left:338px;top:983px;width:440px;height:1px;background:#ddd;"></div>
<div class="a" style="left:808px;top:48px;width:4px;height:940px;background:#e6e6e6;"></div>
<div class="a" style="left:819.2px;top:52px;width:65px;height:20px;border:1px solid #1a7aac;border-radius:3px;background:#fff;"></div>
<div class="a" style="left:841px;top:52px;width:1px;height:22px;background:#1a7aac;"></div>
<div class="a" style="left:863px;top:52px;width:1px;height:22px;background:#1a7aac;"></div>
<svg class="a" style="left:825.1px;top:57.2px" width="13" height="13" viewBox="0 0 13 13"><circle cx="4.8" cy="4.8" r="4" fill="none" stroke="#1a7aac" stroke-width="1.6"/><path d="M2.6 4.8 H7" stroke="#1a7aac" stroke-width="1.1"/><path d="M4.8 2.6 V7" stroke="#1a7aac" stroke-width="1.1"/><path d="M7.6 7.6 L11.2 11.2" stroke="#1a7aac" stroke-width="1.9"/></svg>
<svg class="a" style="left:847.2px;top:57.2px" width="13" height="13" viewBox="0 0 13 13"><circle cx="4.8" cy="4.8" r="4" fill="none" stroke="#1a7aac" stroke-width="1.6"/><path d="M2.6 4.8 H7" stroke="#1a7aac" stroke-width="1.1"/><path d="M7.6 7.6 L11.2 11.2" stroke="#1a7aac" stroke-width="1.9"/></svg>
<svg class="a" style="left:868px;top:57px" width="12" height="12" viewBox="0 0 12 12">
<path d="M10 4.2 A4.6 4.6 0 0 0 1.8 3.8" fill="none" stroke="#1a7aac" stroke-width="1.8"/>
<path d="M10.8 0.8 L10.8 5.2 L6.6 5.2Z" fill="#1a7aac"/>
<path d="M2 7.8 A4.6 4.6 0 0 0 10.2 8.2" fill="none" stroke="#1a7aac" stroke-width="1.8"/>
<path d="M1.2 11.2 L1.2 6.8 L5.4 6.8Z" fill="#1a7aac"/></svg>
<div class="a" style="left:896px;top:55px;width:1.2px;height:17px;background:#b8a48a;"></div>
<div class="a" style="left:907px;top:52px;width:85px;height:20px;border:1px solid #1a7aac;border-radius:3px;background:#fff;"></div>
<div class="t" style="left:913.40px;top:56.77px;font-size:12.21px;line-height:15px;color:#1a7aac;transform:scaleX(1.0323);transform-origin:0 0;">Orientation</div>
<svg class="a" style="left:980px;top:63px" width="8" height="4" viewBox="0 0 8 4"><path d="M0 0 L8 0 L4 4Z" fill="#1a7aac"/></svg>
<div class="a" style="left:1005px;top:55px;width:1.2px;height:17px;background:#b8a48a;"></div>
<div class="a" style="left:1013.3px;top:53.1px;width:158.5px;height:19.6px;border:1px solid #1a7aac;border-radius:3px;background:#fff;"></div>
<div class="t" style="left:1018.00px;top:56.74px;font-size:13px;line-height:16px;color:#555;">surfaces</div>
<svg class="a" style="left:1160px;top:60px" width="8" height="7" viewBox="0 0 8 7"><path d="M0.5 0.5 L7.5 0.5 L4 6.5Z" fill="#555"/></svg>
<div class="a" style="left:1177px;top:52px;width:91px;height:20px;border:1px solid #1a7aac;border-radius:3px;background:#fff;"></div>
<div class="a" style="left:1200.25px;top:52px;width:21.5px;height:20px;background:linear-gradient(#cfcfcf,#e6e6e6);border:1px solid #b0b0b0;"></div>
<div class="a" style="left:1246.5px;top:52px;width:1px;height:22px;background:#1a7aac;"></div>
<svg class="a" style="left:1183px;top:57px" width="14" height="13" viewBox="0 0 14 13"><path d="M5.5,1.75 L0.5,8.75 L2,11.75 L11,10 Z" fill="#f00"/><path d="M5.5,1.75 L0.5,8.75 M5.5,1.75 L11,10 M5.5,1.75 L2,11.75 M0.5,8.75 L2,11.75 M2,11.75 L11,10" stroke="#000" stroke-width="0.9" fill="none"/><path d="M0.5,8.75 Q6,9 11,10" stroke="#000" stroke-width="0.6" fill="none"/><circle cx="5.5" cy="1.75" r="1.1" fill="#000"/><circle cx="0.5" cy="8.75" r="1.1" fill="#000"/><circle cx="2" cy="11.75" r="1.1" fill="#000"/><circle cx="11" cy="10" r="1.1" fill="#000"/></svg>
<svg class="a" style="left:1206px;top:57px" width="14" height="13" viewBox="0 0 14 13"><path d="M5.5,1.75 L2,11.75 L7,10.9 Z" fill="#f00"/><path d="M5.5,1.75 L0.5,8.75 M5.5,1.75 L11,10 M5.5,1.75 L2,11.75 M0.5,8.75 L2,11.75 M2,11.75 L11,10" stroke="#000" stroke-width="0.9" fill="none"/><path d="M0.5,8.75 Q6,9 11,10" stroke="#000" stroke-width="0.6" fill="none"/><circle cx="5.5" cy="1.75" r="1.1" fill="#000"/><circle cx="0.5" cy="8.75" r="1.1" fill="#000"/><circle cx="2" cy="11.75" r="1.1" fill="#000"/><circle cx="11" cy="10" r="1.1" fill="#000"/></svg>
<svg class="a" style="left:1229px;top:57px" width="14" height="13" viewBox="0 0 14 13"><path d="M5.5,1.75 L0.5,8.75 M5.5,1.75 L11,10 M5.5,1.75 L2,11.75 M0.5,8.75 L2,11.75 M2,11.75 L11,10" stroke="#000" stroke-width="0.9" fill="none"/><path d="M0.5,8.75 Q6,9 11,10" stroke="#000" stroke-width="0.6" fill="none"/><path d="M5.3,2.5 L2.2,11" stroke="#f00" stroke-width="0.8"/><circle cx="5.5" cy="1.75" r="1.1" fill="#000"/><circle cx="0.5" cy="8.75" r="1.1" fill="#000"/><circle cx="2" cy="11.75" r="1.1" fill="#000"/><circle cx="11" cy="10" r="1.1" fill="#000"/></svg>
<svg class="a" style="left:1252px;top:57px" width="14" height="13" viewBox="0 0 14 13"><path d="M0.5,8.75 L2,11.75 M2,11.75 L11,10 M4.5,4.2 L0.5,8.75 M6.8,4.2 L11,10 M4.6,4.5 L2,11.75" stroke="#000" stroke-width="0.9" fill="none"/><path d="M0.5,8.75 Q6,9 11,10" stroke="#000" stroke-width="0.6" fill="none"/><circle cx="0.5" cy="8.75" r="1.1" fill="#000"/><circle cx="2" cy="11.75" r="1.1" fill="#000"/><circle cx="11" cy="10" r="1.1" fill="#000"/><circle cx="5.5" cy="3.2" r="2.6" fill="#f00"/></svg>
<div class="a" style="left:1280.5px;top:55px;width:1.2px;height:17px;background:#b8a48a;"></div>
<div class="a" style="left:1291px;top:52px;width:72px;height:20px;border:1px solid #1a7aac;border-radius:3px;background:#fff;"></div>
<div class="t" style="left:1297.30px;top:56.77px;font-size:12.21px;line-height:15px;color:#1a7aac;transform:scaleX(0.9561);transform-origin:0 0;">Selection</div>
<svg class="a" style="left:1351px;top:63px" width="8" height="4" viewBox="0 0 8 4"><path d="M0 0 L8 0 L4 4Z" fill="#1a7aac"/></svg>
<div class="a" style="left:1371.2px;top:52px;width:44px;height:20px;border:1px solid #1a7aac;border-radius:3px;background:#fff;"></div>
<div class="a" style="left:1394.5px;top:52px;width:1px;height:22px;background:#1a7aac;"></div>
<svg class="a" style="left:1377px;top:58.5px" width="12" height="9.5" viewBox="0 0 12 9.5">
<path d="M0.8 4.7 Q6 -0.6 11.2 4.7 Q6 10 0.8 4.7Z" fill="none" stroke="#1a7aac" stroke-width="1.3"/>
<path d="M3.6 3 Q4.5 2 6.5 1.8 L4 7.6 Q3 6.5 3.6 3Z" fill="#1a7aac"/>
<path d="M8.6 0.3 L3.6 9.2" stroke="#fff" stroke-width="2.6"/>
<path d="M8.4 0.4 L3.8 8.9" stroke="#1a7aac" stroke-width="1.5"/></svg>
<svg class="a" style="left:1400px;top:59px" width="12" height="8" viewBox="0 0 12 8">
<path d="M0.8 4 Q6 -1.2 11.2 4 Q6 9.2 0.8 4Z" fill="none" stroke="#1a7aac" stroke-width="1.3"/>
<circle cx="6.2" cy="3.9" r="2.2" fill="#1a7aac"/></svg>
<div class="a" style="left:1429px;top:55px;width:1.2px;height:17px;background:#b8a48a;"></div>
<div class="a" style="left:1437.2px;top:52px;width:64px;height:20px;border:1px solid #1a7aac;border-radius:3px;background:#fff;"></div>
<div class="t" style="left:1443.50px;top:56.77px;font-size:12.21px;line-height:15px;color:#1a7aac;transform:scaleX(0.9524);transform-origin:0 0;">Create set</div>
<div class="a" style="left:1507.2px;top:52px;width:52px;height:20px;border:1px solid #1a7aac;border-radius:3px;background:#fff;"></div>
<div class="t" style="left:1513.70px;top:56.77px;font-size:12.21px;line-height:15px;color:#1a7aac;transform:scaleX(1.0138);transform-origin:0 0;">Filter</div>
<svg class="a" style="left:1547px;top:63px" width="8" height="4" viewBox="0 0 8 4"><path d="M0 0 L8 0 L4 4Z" fill="#1a7aac"/></svg>
<div class="a" style="left:816px;top:77px;width:1102px;height:906px;border:1px solid #cfcfcf;background:linear-gradient(#f9f9f9, #d4d4d4);"></div>
<svg class="a" style="left:0;top:0" width="1920" height="988" viewBox="0 0 1920 988">
<defs>
<linearGradient id="rimg" x1="1216" y1="0" x2="1549" y2="0" gradientUnits="userSpaceOnUse">
<stop offset="0" stop-color="#58686a"/><stop offset="0.07" stop-color="#7a8b8d"/><stop offset="0.5" stop-color="#97a7a9"/><stop offset="0.82" stop-color="#8e9ea0"/><stop offset="0.96" stop-color="#6d7c7e"/><stop offset="1" stop-color="#5a696b"/></linearGradient>
<linearGradient id="frontg" x1="1073" y1="0" x2="1110" y2="0" gradientUnits="userSpaceOnUse">
<stop offset="0" stop-color="#7e8e91"/><stop offset="0.25" stop-color="#93a3a6"/><stop offset="0.5" stop-color="#84959a"/><stop offset="0.8" stop-color="#8fa0a3"/><stop offset="1" stop-color="#8b9c9f"/></linearGradient>
<linearGradient id="notchg" x1="1400" y1="680" x2="1450" y2="700" gradientUnits="userSpaceOnUse">
<stop offset="0" stop-color="#6f7e7f"/><stop offset="0.3" stop-color="#849395"/><stop offset="0.6" stop-color="#7c8b8d"/><stop offset="1" stop-color="#6b797a"/></linearGradient>
</defs>
<path d="M979,364 L987,530 L1073,774 L1075,578 Z" fill="#374649"/>
<path d="M1073,577 L1073,773 Q1076,791 1103,791 L1159,781 L1152,768 L1155,764 Q1157,761 1163,761 L1209,752.7 L1222,749 L1227,766.3 L1337,744.5 L1324,716 L1326,703 Q1329,698.5 1335,698 L1398,686 L1427,725 L1470,716 Q1473,715 1474,711 L1478.7,683.5 L1501.5,709.8 L1733,662 Q1739,660 1741,656 L1792,503 L1100,590 Q1080,592 1073,577 Z" fill="url(#frontg)"/>
<path d="M1398,686 L1449,677.4 Q1452,678 1451.4,681 L1447.3,700.7 Q1440,712 1428.6,716 L1427,725 Z" fill="url(#notchg)"/>
<path d="M1478.7,670.4 L1511,666.5 L1501.5,709.8 L1478.7,683.5 Z" fill="#6d7b7c"/>
<path d="M1152,767 L1159,781 L1156,781 L1151,772Z" fill="#2a3232"/>
<path d="M1324,714 L1337,738 L1337,744 L1333,741 L1324,722Z" fill="#4a5656"/>
<path d="M1209,752.7 L1222,749 L1227,766.3 L1220,766 L1213,760Z" fill="#7d8c8e"/>
<path d="M980,372 Q976,361 992,359 L1537,341 Q1549,341 1557,348 L1789,492 Q1798,499 1791,504 L1100,590 Q1080,592 1073,577 Z" fill="#707e7e"/>
<path d="M1215.87,401.78 L1216.04,403.94 L1216.39,406.12 L1216.93,408.31 L1217.64,410.51 L1218.53,412.72 L1219.60,414.94 L1220.84,417.17 L1222.26,419.40 L1223.85,421.63 L1225.62,423.85 L1227.55,426.08 L1229.65,428.29 L1231.92,430.50 L1234.35,432.70 L1236.94,434.88 L1239.68,437.05 L1242.58,439.20 L1245.64,441.33 L1248.84,443.43 L1252.19,445.51 L1255.67,447.56 L1259.30,449.59 L1263.06,451.58 L1266.95,453.54 L1270.96,455.46 L1275.10,457.34 L1279.35,459.19 L1283.71,460.99 L1288.18,462.75 L1292.76,464.46 L1297.43,466.13 L1302.20,467.74 L1307.05,469.31 L1311.99,470.82 L1317.00,472.28 L1322.08,473.68 L1327.24,475.02 L1332.45,476.31 L1337.72,477.53 L1343.04,478.69 L1348.40,479.80 L1353.80,480.83 L1359.23,481.80 L1364.69,482.71 L1370.17,483.55 L1375.67,484.32 L1381.18,485.02 L1386.69,485.65 L1392.19,486.21 L1397.69,486.70 L1403.17,487.12 L1408.64,487.47 L1414.08,487.75 L1419.48,487.95 L1424.85,488.08 L1430.18,488.14 L1435.45,488.12 L1440.67,488.03 L1445.84,487.87 L1450.93,487.64 L1455.96,487.33 L1460.90,486.96 L1465.77,486.51 L1470.55,485.99 L1475.24,485.40 L1479.83,484.73 L1484.31,484.00 L1488.69,483.20 L1492.96,482.34 L1497.12,481.41 L1501.15,480.41 L1505.06,479.34 L1508.84,478.22 L1512.48,477.03 L1515.99,475.78 L1519.36,474.47 L1522.58,473.10 L1525.66,471.67 L1528.59,470.19 L1531.36,468.66 L1533.97,467.07 L1536.42,465.44 L1538.71,463.75 L1540.84,462.02 L1542.80,460.24 L1544.59,458.42 L1546.21,456.56 L1547.65,454.66 L1548.92,452.72 L1550.02,450.75 L1550.35,456.49 L1549.62,458.80 L1548.72,461.07 L1547.67,463.30 L1546.47,465.50 L1545.10,467.66 L1543.58,469.78 L1541.91,471.85 L1540.08,473.88 L1538.10,475.86 L1535.97,477.80 L1533.70,479.68 L1531.28,481.50 L1528.72,483.28 L1526.02,484.99 L1523.18,486.65 L1520.21,488.25 L1517.11,489.79 L1513.87,491.26 L1510.51,492.68 L1507.03,494.02 L1503.43,495.30 L1499.71,496.51 L1495.88,497.66 L1491.94,498.73 L1487.90,499.73 L1483.75,500.66 L1479.51,501.52 L1475.17,502.31 L1470.75,503.02 L1466.24,503.65 L1461.64,504.21 L1456.98,504.69 L1452.24,505.10 L1447.43,505.43 L1442.56,505.68 L1437.63,505.85 L1432.64,505.95 L1427.61,505.97 L1422.53,505.91 L1417.42,505.78 L1412.27,505.56 L1407.08,505.27 L1401.88,504.90 L1396.65,504.46 L1391.41,503.93 L1386.16,503.34 L1380.90,502.66 L1375.65,501.92 L1370.40,501.09 L1365.15,500.20 L1359.93,499.23 L1354.72,498.19 L1349.54,497.08 L1344.38,495.91 L1339.27,494.66 L1334.19,493.34 L1329.15,491.96 L1324.16,490.52 L1319.23,489.01 L1314.36,487.44 L1309.54,485.81 L1304.80,484.13 L1300.13,482.38 L1295.53,480.58 L1291.01,478.72 L1286.58,476.82 L1282.24,474.86 L1277.99,472.85 L1273.84,470.80 L1269.79,468.71 L1265.84,466.57 L1262.00,464.39 L1258.28,462.17 L1254.67,459.92 L1251.18,457.63 L1247.81,455.31 L1244.57,452.96 L1241.46,450.58 L1238.48,448.17 L1235.63,445.75 L1232.92,443.30 L1230.35,440.83 L1227.93,438.35 L1225.64,435.85 L1223.51,433.35 L1221.52,430.83 L1219.68,428.31 L1218.00,425.78 L1216.47,423.25 L1215.09,420.72 Z" fill="url(#rimg)"/>
<path d="M1127.3,609.2 L1607.3,543.5 L1617.4,552.8 L1133.3,620.2Z" fill="#6f7d7d"/>
<path d="M1127.3,609.2 L1133.3,620.2 L1133,640.7 L1127,633.8Z" fill="#7f8e90"/>
<path d="M1133.3,620.2 L1617.4,552.8 L1613,568 L1133,640.7Z" fill="#e20000"/>
<path d="M1126.5,647 L1603,575.6 L1608,585.7 L1132.2,658.4Z" fill="#6f7d7d"/>
<path d="M1126.5,647 L1132.2,658.4 L1132,677.5 L1126.5,671Z" fill="#7f8e90"/>
<path d="M1132.2,658.4 L1608,585.7 L1604,601 L1132,677.5Z" fill="#e20000"/>
<path d="M1125,683.6 L1595,607 L1600,616 L1130.9,695.3Z" fill="#6f7d7d"/>
<path d="M1125,683.6 L1130.9,695.3 L1131,714.4 L1125,708Z" fill="#7f8e90"/>
<path d="M1130.9,695.3 L1600,616 L1597.8,629.7 L1131,714.4Z" fill="#e20000"/>
<!-- axis -->
<path d="M896.9,903.7 L901.5,870" stroke="#44aa44" stroke-width="1.8"/>
<path d="M898.5,869.5 L902,864.5 L905.5,870 Z" fill="#44aa44"/>
<path d="M896.9,903.7 L923,900.9" stroke="#cc2020" stroke-width="1.8"/>
<path d="M922,898 L927.5,900.5 L922.5,903.5 Z" fill="#cc2020"/>
<path d="M896.9,903.7 L913,921" stroke="#6e6ee8" stroke-width="1.8"/>
<circle cx="913.6" cy="922.5" r="2.6" fill="#6e6ee8"/>
<text x="896" y="861.7" font-family="Liberation Sans" font-weight="bold" font-style="italic" font-size="27" fill="#3cb83c" transform="translate(896 861.7) scale(0.85 1) translate(-896 -861.7)">Y</text>
<text x="927.5" y="903.3" font-family="Liberation Sans" font-weight="bold" font-style="italic" font-size="22" fill="#dd1a1a" transform="translate(927.5 903.3) scale(0.8 1) translate(-927.5 -903.3)">X</text>
<text x="912" y="937" font-family="Liberation Sans" font-weight="bold" font-size="30.5" fill="#7070f0" transform="translate(912 937) scale(0.92 1) translate(-912 -937)">Z</text>
</svg>
<div class="a" style="left:1640.3px;top:114.4px;width:237.4px;height:73px;border:1px solid #a9d3e3;border-radius:3px;"></div>
<svg class="a" style="left:1652.8px;top:128.9px" width="9.5" height="9.5" viewBox="0 0 10 10"><rect x="0.5" y="0.5" width="9" height="9" rx="2" fill="#f2f2f8" stroke="#7d82c4" stroke-width="1"/><path d="M2.3 5 H7.7" stroke="#1a1ad0" stroke-width="1.2"/></svg>
<div class="t" style="left:1665.30px;top:126.26px;font-size:10.8px;line-height:13px;color:#6e9db5;">Scene</div>
<svg class="a" style="left:1668.9px;top:148px" width="9.5" height="9.5" viewBox="0 0 10 10"><rect x="0.5" y="0.5" width="9" height="9" rx="2" fill="#f2f2f8" stroke="#7d82c4" stroke-width="1"/><path d="M2.3 5 H7.7" stroke="#1a1ad0" stroke-width="1.2"/></svg>
<div class="t" style="left:1681.00px;top:145.22px;font-size:10.9px;line-height:13px;color:#6e9db5;">fan mesh</div>
<svg class="a" style="left:1685px;top:167.5px" width="9.5" height="9.5" viewBox="0 0 10 10"><rect x="0.5" y="0.5" width="9" height="9" rx="2" fill="#f2f2f8" stroke="#7d82c4" stroke-width="1"/><path d="M2.3 5 H7.7" stroke="#1a1ad0" stroke-width="1.2"/><path d="M4.5 2.3 V6.7" stroke="#1a1ad0" stroke-width="1.2"/></svg>
<svg class="a" style="left:1699px;top:167px" width="12" height="9" viewBox="0 0 12 9"><path d="M0.3 4.5 Q6 -1 11.7 4.5 Q6 10 0.3 4.5Z" fill="#7a7a7a"/><circle cx="6" cy="4.5" r="2.2" fill="#cfcfcf"/><circle cx="6" cy="4.5" r="1.1" fill="#7a7a7a"/></svg>
<div class="t" style="left:1715.30px;top:165.26px;font-size:10.8px;line-height:13px;color:#6e9db5;">region0</div>
<svg class="a" style="left:1870px;top:179px" width="8" height="8" viewBox="0 0 8 8"><path d="M1 7.5 L7.5 1 M4 7.5 L7.5 4" stroke="#666" stroke-width="0.8"/></svg>
<div class="a" style="left:826.8px;top:950.6px;width:196.5px;height:24.7px;border:1px solid #bcd6e2;border-radius:3px;background:rgba(255,255,255,0.25);"></div>
<div class="t" style="left:835.30px;top:958.22px;font-size:10.9px;line-height:13px;color:#a2b6c2;">solid_0_solid_0_face_32</div>
<svg class="a" style="left:1015px;top:968px" width="8" height="8" viewBox="0 0 8 8"><path d="M1 7.5 L7.5 1 M4 7.5 L7.5 4" stroke="#777" stroke-width="0.8"/></svg>
<div class="a" style="left:1753px;top:955.9px;width:137px;height:40px;background:#005e9e;border-radius:4px 4px 0 0;"></div>
<svg class="a" style="left:1763px;top:965px" width="25" height="17" viewBox="0 0 25 17">
<ellipse cx="12" cy="8" rx="11.9" ry="8" fill="#fff"/><path d="M18 12.5 L24 16 L14 15.5Z" fill="#fff"/>
<g transform="rotate(-3 12 8)"><rect x="5.4" y="4.2" width="13.3" height="8.4" fill="#005e9e"/><rect x="13.2" y="2.9" width="2.8" height="1.6" rx="0.6" fill="#005e9e"/>
<circle cx="12.2" cy="8.3" r="2.5" fill="none" stroke="#fff" stroke-width="1.3"/></g></svg>
<div class="t" style="left:1797.40px;top:964.97px;font-size:13.08px;line-height:16px;color:#fff;transform:scaleX(0.9009);transform-origin:0 0;">Report an issue</div>
<div class="a" style="left:322px;top:515px;width:1px;height:6px;background:#777"></div><div class="a" style="left:324px;top:515px;width:1px;height:6px;background:#777"></div>
<div class="a" style="left:809px;top:515px;width:1px;height:6px;background:#777"></div><div class="a" style="left:811px;top:515px;width:1px;height:6px;background:#777"></div>
</body></html>
